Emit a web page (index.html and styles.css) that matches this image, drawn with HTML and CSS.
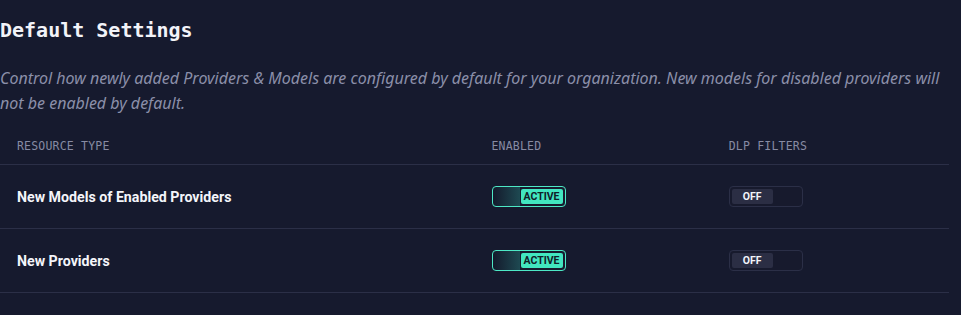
FILE: index.html
```html
<!DOCTYPE html>
<html>
<head>
<meta charset="utf-8">
<link rel="stylesheet" href="styles.css">
</head>
<body>
<section class="settings">
  <h2 class="title">Default Settings</h2>
  <p class="desc">Control how newly added Providers &amp; Models are configured by default for your organization. New models for disabled providers will not be enabled by default.</p>
  <div class="table">
    <div class="row head">
      <div class="cell c1">RESOURCE TYPE</div>
      <div class="cell c2">ENABLED</div>
      <div class="cell c3">DLP FILTERS</div>
    </div>
    <div class="row">
      <div class="cell c1 label">New Models of Enabled Providers</div>
      <div class="cell c2"><span class="toggle on"><span class="knob">ACTIVE</span></span></div>
      <div class="cell c3"><span class="toggle off"><span class="knob">OFF</span></span></div>
    </div>
    <div class="row">
      <div class="cell c1 label">New Providers</div>
      <div class="cell c2"><span class="toggle on"><span class="knob">ACTIVE</span></span></div>
      <div class="cell c3"><span class="toggle off"><span class="knob">OFF</span></span></div>
    </div>
  </div>
</section>
</body>
</html>
```
FILE: styles.css
```css
html, body {
  margin: 0;
  padding: 0;
  background: #161a2e;
}
.settings {
  width: 949px;
  padding-top: 16px;
  font-family: "Noto Sans", sans-serif;
}
.title {
  margin: 0;
  font-family: "DejaVu Sans Mono", monospace;
  font-weight: bold;
  font-size: 20px;
  line-height: 28px;
  color: #f2f3f8;
}
.desc {
  margin: 22px 0 0 0;
  font-style: italic;
  font-size: 16px;
  line-height: 25px;
  color: #8b8fa9;
}
.table {
  margin-top: 11px;
}
.row {
  display: grid;
  grid-template-columns: 50% 25% 25%;
  align-items: center;
  height: 63px;
  border-bottom: 1px solid #2b2f47;
}
.row.head {
  height: 37px;
}
.cell {
  padding-left: 17px;
}
.head .cell {
  font-family: "DejaVu Sans Mono", monospace;
  font-size: 11.5px;
  color: #878ba3;
  letter-spacing: 0.2px;
}
.label {
  font-family: Roboto, sans-serif;
  font-weight: bold;
  font-size: 14.2px;
  color: #f4f5fa;
}
.toggle {
  display: flex;
  box-sizing: border-box;
  width: 74px;
  height: 21px;
  border-radius: 4px;
  padding: 2px;
}
.toggle.on {
  border: 1px solid #4de8c5;
  background: linear-gradient(90deg, #141a2c 0%, #1e4a52 38%, #171b2e 38%);
  justify-content: flex-end;
}
.toggle.off {
  border: 1px solid #2b2f47;
  background: #171a2d;
}
.knob {
  display: flex;
  align-items: center;
  justify-content: center;
  border-radius: 2px;
  font-family: Roboto, sans-serif;
  font-weight: bold;
  font-size: 10.5px;
}
.on .knob {
  width: 42px;
  background: #42e6c0;
  color: #102028;
}
.off .knob {
  width: 41px;
  background: #2b2e44;
  color: #f2f3f8;
}
```
